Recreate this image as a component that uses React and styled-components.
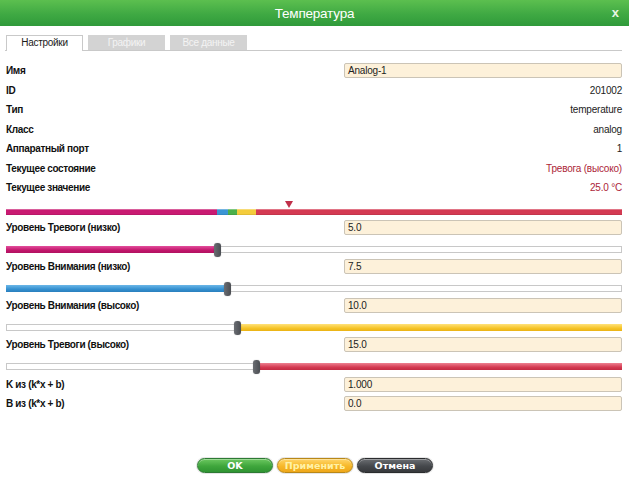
import React from "react";
import styled, { createGlobalStyle } from "styled-components";

const GlobalStyle = createGlobalStyle`
  html, body {
    margin: 0;
    padding: 0;
    background: #fff;
  }
  body {
    font-family: "Liberation Sans", Arial, sans-serif;
  }
`;

const info = [
  { label: "ID", value: "201002" },
  { label: "Тип", value: "temperature" },
  { label: "Класс", value: "analog" },
  { label: "Аппаратный порт", value: "1" },
  { label: "Текущее состояние", value: "Тревога (высоко)", alert: true },
  { label: "Текущее значение", value: "25.0 °C", alert: true },
];

const levels = [
  { label: "Уровень Тревоги (низко)", value: "5.0", pos: 211.5, color: "pink", side: "left" },
  { label: "Уровень Внимания (низко)", value: "7.5", pos: 221, color: "blue", side: "left" },
  { label: "Уровень Внимания (высоко)", value: "10.0", pos: 231, color: "yellow", side: "right" },
  { label: "Уровень Тревоги (высоко)", value: "15.0", pos: 250, color: "red", side: "right" },
];

const fills = {
  pink: "linear-gradient(#e34f9c, #c2166c 60%, #b01260)",
  blue: "linear-gradient(#6cb7e8, #3490d0 60%, #2a7fbd)",
  yellow: "linear-gradient(#ffe27a, #f6c428 60%, #eab214)",
  red: "linear-gradient(#ee8090, #d43a52 60%, #c32a42)",
};

const App = () => {
  return (
    <>
      <GlobalStyle />
      <Dialog>
        <Header>
          <Title>Температура</Title>
          <Close>x</Close>
        </Header>
        <Tabs>
          <Tab $active>Настройки</Tab>
          <Tab>Графики</Tab>
          <Tab>Все данные</Tab>
        </Tabs>
        <Body>
          <Row>
            <Label>Имя</Label>
            <Field>Analog-1</Field>
          </Row>
          {info.map((r) => (
            <Row key={r.label}>
              <Label>{r.label}</Label>
              <Value $alert={r.alert}>{r.value}</Value>
            </Row>
          ))}
          <Scale>
            <Marker />
            <ScaleBar>
              <Segment $w={211} $c="#c91a72" />
              <Segment $w={11} $c="#3b95d4" />
              <Segment $w={9} $c="#4bb04a" />
              <Segment $w={19} $c="#f4cc3c" />
              <Segment $grow $c="#d43a52" />
            </ScaleBar>
          </Scale>
          {levels.map((l) => (
            <Level key={l.label}>
              <Row>
                <Label>{l.label}</Label>
                <Field>{l.value}</Field>
              </Row>
              <Slider>
                <Track />
                <Fill
                  $color={l.color}
                  style={
                    l.side === "left"
                      ? { left: 0, width: l.pos }
                      : { left: l.pos, right: 0 }
                  }
                />
                <Thumb style={{ left: l.pos - 3.5 }} />
              </Slider>
            </Level>
          ))}
          <Coeffs>
            <Row>
              <Label>K из (k*x + b)</Label>
              <Field>1.000</Field>
            </Row>
            <Row>
              <Label>B из (k*x + b)</Label>
              <Field>0.0</Field>
            </Row>
          </Coeffs>
        </Body>
        <Footer>
          <Button $kind="ok">OK</Button>
          <Button $kind="apply">Применить</Button>
          <Button $kind="cancel">Отмена</Button>
        </Footer>
      </Dialog>
    </>
  );
};
export default App;

const Dialog = styled.div`
  width: 629px;
  height: 488px;
  display: flex;
  flex-direction: column;
  background: #fff;
  overflow: hidden;
`;

const Header = styled.div`
  position: relative;
  height: 26px;
  display: flex;
  align-items: center;
  justify-content: center;
  background: linear-gradient(#5cbf4f, #3fa943 55%, #2f9a3a);
`;

const Title = styled.div`
  color: #fff;
  font-size: 13.5px;
  letter-spacing: -0.2px;
`;

const Close = styled.div`
  position: absolute;
  right: 10px;
  top: 5px;
  color: #e8f6e4;
  font-size: 13px;
  font-weight: bold;
`;

const Tabs = styled.div`
  display: flex;
  gap: 5px;
  margin: 9px 7px 0 5px;
  padding-left: 1px;
  border-bottom: 1px solid #c9c9c9;
`;

const Tab = styled.div`
  width: 75px;
  height: 14px;
  line-height: 14px;
  text-align: center;
  font-size: 10px;
  letter-spacing: -0.3px;
  color: ${(p) => (p.$active ? "#1a1a1a" : "#f4f4f4")};
  background: ${(p) => (p.$active ? "#fff" : "#d3d3d3")};
  border: 1px solid ${(p) => (p.$active ? "#c9c9c9" : "#d3d3d3")};
  border-bottom: none;
  margin-bottom: ${(p) => (p.$active ? "-1px" : "0")};
  padding-bottom: ${(p) => (p.$active ? "1px" : "0")};
`;

const Body = styled.div`
  display: flex;
  flex-direction: column;
  padding: 10px 7px 0 6px;
`;

const Row = styled.div`
  display: grid;
  grid-template-columns: 338px 278px;
  align-items: center;
  height: 19.5px;
`;

const Label = styled.div`
  font-size: 10px;
  font-weight: bold;
  color: #111;
  letter-spacing: -0.35px;
  white-space: nowrap;
`;

const Value = styled.div`
  font-size: 10px;
  text-align: right;
  letter-spacing: -0.2px;
  color: ${(p) => (p.$alert ? "#ad2638" : "#222")};
`;

const Field = styled.div`
  box-sizing: border-box;
  height: 15px;
  line-height: 13px;
  padding-left: 3px;
  font-size: 10px;
  color: #222;
  letter-spacing: -0.2px;
  background: #fdf1da;
  border: 1px solid #cbc4b6;
  border-radius: 2px;
`;

const Scale = styled.div`
  display: flex;
  flex-direction: column;
  margin-top: 3px;
  margin-bottom: 3px;
`;

const Marker = styled.div`
  width: 0;
  height: 0;
  margin-left: 279px;
  border-left: 4px solid transparent;
  border-right: 4px solid transparent;
  border-top: 7px solid #c0304a;
  margin-bottom: 1px;
`;

const ScaleBar = styled.div`
  display: flex;
  height: 6px;
  box-shadow: inset 0 1px 0 rgba(255, 255, 255, 0.35);
`;

const Segment = styled.div`
  width: ${(p) => (p.$w ? `${p.$w}px` : "auto")};
  flex: ${(p) => (p.$grow ? "1" : "none")};
  background: ${(p) => p.$c};
  box-shadow: inset 0 1px 0 rgba(255, 255, 255, 0.3), inset 0 -1px 0 rgba(0, 0, 0, 0.08);
`;

const Level = styled.div`
  display: flex;
  flex-direction: column;
  margin-top: 2px;

  & > ${Row} {
    height: 16px;
  }
`;

const Slider = styled.div`
  position: relative;
  height: 14px;
  margin-top: 7px;
`;

const Track = styled.div`
  position: absolute;
  left: 0;
  right: 0;
  top: 3.5px;
  height: 5px;
  border: 1px solid #c8c8c8;
  background: #fff;
`;

const Fill = styled.div`
  position: absolute;
  top: 3.5px;
  height: 7px;
  background: ${(p) => fills[p.$color]};
`;

const Thumb = styled.div`
  position: absolute;
  top: 0;
  width: 7px;
  height: 14px;
  border-radius: 3px;
  background: linear-gradient(90deg, #6a6d72, #4a4d52);
  box-shadow: 0 0 1px rgba(0, 0, 0, 0.4);
`;

const Coeffs = styled.div`
  display: flex;
  flex-direction: column;
  margin-top: 3px;

  & > ${Row} {
    height: 16px;
    margin-bottom: 3px;
  }
`;

const buttonSkins = {
  ok: {
    bg: "linear-gradient(#6cc860, #3fa63c 55%, #2f9432)",
    border: "#2d7a33",
    color: "#fff",
  },
  apply: {
    bg: "linear-gradient(#ffd66a, #f7b829 55%, #eea71a)",
    border: "#b98818",
    color: "#fff2a6",
  },
  cancel: {
    bg: "linear-gradient(#6b6e72, #45484c 55%, #37393c)",
    border: "#2a2c2e",
    color: "#fff",
  },
};

const Footer = styled.div`
  margin-top: auto;
  margin-bottom: 15px;
  display: flex;
  justify-content: center;
  gap: 4px;
  padding-left: 1px;
`;

const Button = styled.button`
  box-sizing: border-box;
  width: 76px;
  height: 15px;
  padding: 0;
  border-radius: 8px;
  border: 1px solid ${(p) => buttonSkins[p.$kind].border};
  background: ${(p) => buttonSkins[p.$kind].bg};
  color: ${(p) => buttonSkins[p.$kind].color};
  font-family: "DejaVu Sans", Verdana, sans-serif;
  font-weight: bold;
  font-size: 9.5px;
  line-height: 13px;
  box-shadow: 0 0 0 1px #e6e6e6, inset 0 1px 0 rgba(255, 255, 255, 0.35);
`;
